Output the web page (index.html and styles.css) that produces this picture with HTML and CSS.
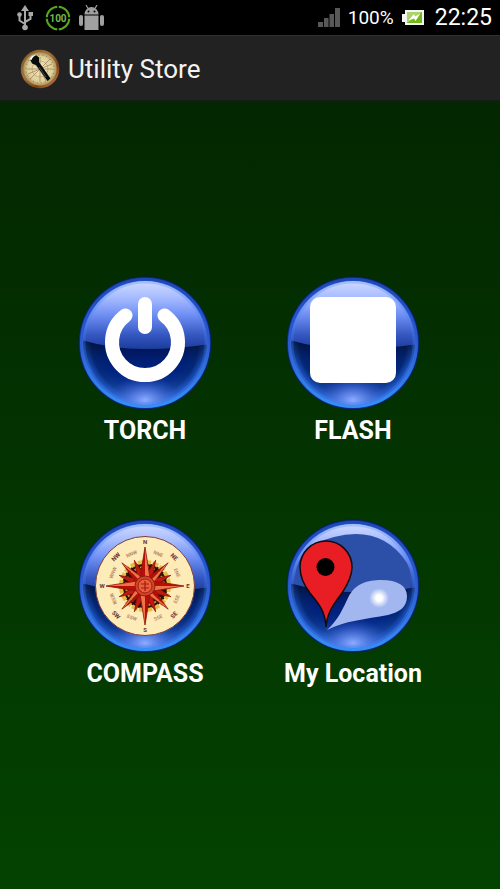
FILE: index.html
```html
<!DOCTYPE html>
<html lang="en">
<head>
    <meta charset="UTF-8">
    <meta name="viewport" content="width=device-width, initial-scale=1.0">
    <title>Utility Store</title>
    <link rel="stylesheet" href="styles.css">
</head>
<body>
    <!-- shared glass ball -->
    <svg class="defs" width="0" height="0" aria-hidden="true">
        <defs>
            <radialGradient id="rim" cx="50%" cy="50%" r="50%">
                <stop offset="0.9" stop-color="#2358cc"/>
                <stop offset="0.96" stop-color="#1d4fc0"/>
                <stop offset="1" stop-color="#04195c"/>
            </radialGradient>
            <linearGradient id="rimLight" x1="0" y1="0" x2="0" y2="1">
                <stop offset="0" stop-color="#1e48b8"/>
                <stop offset="0.5" stop-color="#2a5cd0"/>
                <stop offset="1" stop-color="#3490f4"/>
            </linearGradient>
            <linearGradient id="upper" x1="0" y1="0" x2="0" y2="1">
                <stop offset="0" stop-color="#d2dcff"/>
                <stop offset="0.25" stop-color="#a8bcff"/>
                <stop offset="0.5" stop-color="#7090f4"/>
                <stop offset="0.8" stop-color="#3456c0"/>
                <stop offset="1" stop-color="#1c3c9c"/>
            </linearGradient>
            <radialGradient id="lower" gradientUnits="userSpaceOnUse" cx="67" cy="67" r="62">
                <stop offset="0" stop-color="#001c78"/>
                <stop offset="0.7" stop-color="#001f78"/>
                <stop offset="0.86" stop-color="#06286f"/>
                <stop offset="0.93" stop-color="#1a4cae"/>
                <stop offset="1" stop-color="#2c6ce0"/>
            </radialGradient>
            <linearGradient id="lowerTint" x1="0" y1="0" x2="0" y2="1">
                <stop offset="0" stop-color="#000820" stop-opacity="0.75"/>
                <stop offset="0.45" stop-color="#002a90" stop-opacity="0.25"/>
                <stop offset="1" stop-color="#3a80f0" stop-opacity="0.8"/>
            </linearGradient>
            <radialGradient id="glow">
                <stop offset="0" stop-color="#8cacff"/>
                <stop offset="0.4" stop-color="#5c80e8" stop-opacity="0.75"/>
                <stop offset="1" stop-color="#2850c0" stop-opacity="0"/>
            </radialGradient>
            <radialGradient id="spot">
                <stop offset="0.3" stop-color="#fff"/>
                <stop offset="1" stop-color="#fff" stop-opacity="0"/>
            </radialGradient>
            <clipPath id="ballClip"><circle cx="67" cy="67" r="62"/></clipPath>
            <symbol id="ball" viewBox="0 0 134 134">
                <circle cx="67" cy="67" r="66.500" fill="url(#rim)"/>
                <circle cx="67" cy="67" r="63" fill="none" stroke="url(#rimLight)" stroke-width="4"/>
                <circle cx="67" cy="67" r="62" fill="url(#lower)"/>
                <g clip-path="url(#ballClip)">
                    <path d="M4 64Q32 73 67 73T130 68V130H4Z" fill="url(#lowerTint)"/>
                    <path d="M4 64Q32 73 67 73T130 68V4H4Z" fill="url(#upper)"/>
                    <ellipse cx="67" cy="124" rx="38" ry="24" fill="url(#glow)"/>
                </g>
                <circle cx="67" cy="67" r="61" fill="none" stroke="#4a86f4" stroke-opacity="0.3" stroke-width="3"/>
            </symbol>
            <!-- two-tone compass point, drawn towards north -->
            <symbol id="ray" viewBox="-10 -40 20 40" overflow="visible">
                <path d="M0-39L-5-8 0 0Z" fill="#b80d08"/>
                <path d="M0-39L5-8 0 0Z" fill="#ee7448"/>
                <path d="M0-39L-5-8 0 0 5-8Z" fill="none" stroke="#901008" stroke-width="0.800"/>
            </symbol>
        </defs>
    </svg>

    <div class="status-bar">
        <div class="status-left">
            <svg class="usb" viewBox="0 0 16 26" aria-hidden="true">
                <path d="M8 4V22M8 19L2.500 15.500V10M8 17L13.500 14V9" fill="none" stroke="#a8a8a8" stroke-width="2"/>
                <path d="M8 0L12 6H4ZM11.500 7H16V11H11.500Z" fill="#a8a8a8"/>
                <circle cx="2.500" cy="9.500" r="2.300" fill="#a8a8a8"/>
                <circle cx="8" cy="22.500" r="2.800" fill="#a8a8a8"/>
            </svg>
            <svg class="charge" viewBox="0 0 26 26" aria-hidden="true">
                <circle cx="13" cy="13" r="11.300" fill="none" stroke="#58a81e" stroke-width="2"/>
                <path d="M13 0V4M13 22V26M0 13H4M22 13H26" stroke="#000" stroke-width="1.500"/>
                <text x="13" y="17" text-anchor="middle" class="charge-text">100</text>
            </svg>
            <svg class="droid" viewBox="0 0 25 25" aria-hidden="true">
                <g fill="#a0a0a0">
                    <path d="M5.500 9.500A7 7.500 0 0 1 19.500 9.500ZM5.500 10.500H19.500V25H5.500Z"/>
                    <rect x="0" y="10" width="4" height="11" rx="2"/>
                    <rect x="21" y="10" width="4" height="11" rx="2"/>
                </g>
                <path d="M7 0L9 3.500M18 0L16 3.500" stroke="#a0a0a0" stroke-width="1.200"/>
                <circle cx="9.500" cy="6.500" r="1" fill="#000"/>
                <circle cx="15.500" cy="6.500" r="1" fill="#000"/>
            </svg>
        </div>
        <div class="status-right">
            <svg class="signal" viewBox="0 0 22 19" aria-hidden="true">
                <path d="M0 14H5V19H0ZM6 10H10.500V19H6ZM11.500 6H16V19H11.500ZM17 0H22V19H17Z" fill="#585858"/>
            </svg>
            <span class="percent">100%</span>
            <svg class="battery" viewBox="0 0 22 15" aria-hidden="true">
                <path d="M3 0H22V15H3V12H0V4H3Z" fill="#f4f4f4"/>
                <rect x="5" y="2" width="15" height="11" fill="#72b816"/>
                <path d="M5 2H20L5 13Z" fill="#a8d468"/>
                <path d="M6.500 10.500L12 4L13 6.500L18.500 3.500L13.500 11L12 8.500Z" fill="#fff"/>
            </svg>
            <span class="clock">22:25</span>
        </div>
    </div>

    <header class="action-bar">
        <svg class="app-icon" viewBox="0 0 40 40" aria-hidden="true">
            <defs>
                <radialGradient id="face">
                    <stop offset="0" stop-color="#f4ecc0"/>
                    <stop offset="0.7" stop-color="#dcd098"/>
                    <stop offset="1" stop-color="#987840"/>
                </radialGradient>
                <linearGradient id="wood" x1="0" y1="0" x2="1" y2="1">
                    <stop offset="0" stop-color="#74582c"/>
                    <stop offset="0.4" stop-color="#a87238"/>
                    <stop offset="0.7" stop-color="#804018"/>
                    <stop offset="1" stop-color="#d08a50"/>
                </linearGradient>
            </defs>
            <circle cx="20" cy="20" r="18" fill="url(#face)" stroke="url(#wood)" stroke-width="2.500"/>
            <circle cx="20" cy="20" r="14" fill="none" stroke="#86764a" stroke-width="1" stroke-dasharray="1 3"/>
            <path d="M20 8V33M7 20H33M10 11L30 30M30 10L10 30M14 8L26 32M8 25L32 15" stroke="#9c7650" stroke-width="0.700"/>
            <circle cx="20" cy="20" r="8" fill="none" stroke="#a88458" stroke-width="0.500"/>
            <path d="M10 10Q12 6 16 6L19 8.500L19 13L30.500 29.500L27.500 32L16 16L12 14.500Z" fill="#080b0b"/>
            <path d="M9.500 10.500Q11 5.500 16.500 6Q12.500 7.500 11.500 11Z" fill="#f8fcff"/>
            <path d="M19 18L26 28" stroke="#3c5054" stroke-width="1"/>
        </svg>
        <h1 class="title">Utility Store</h1>
    </header>

    <main class="tools">
        <button type="button" class="tool">
            <svg class="tool-icon" viewBox="0 0 134 134" aria-hidden="true">
                <use href="#ball" width="134" height="134"/>
                <path d="M47.500 39.500A33 33 0 1 0 86.500 39.500M67 28V51" fill="none" stroke="#fff" stroke-width="14" stroke-linecap="round"/>
            </svg>
            <span class="tool-label">TORCH</span>
        </button>
        <button type="button" class="tool">
            <svg class="tool-icon" viewBox="0 0 134 134" aria-hidden="true">
                <use href="#ball" width="134" height="134"/>
                <rect x="24" y="21" width="86" height="86" rx="10" fill="#fff"/>
            </svg>
            <span class="tool-label">FLASH</span>
        </button>
        <button type="button" class="tool">
            <svg class="tool-icon" viewBox="0 0 134 134" aria-hidden="true">
                <use href="#ball" width="134" height="134"/>
                <g transform="translate(67 67)">
                    <circle r="49.500" fill="#fdebb8" stroke="#7c3a3c" stroke-width="1"/>
                    <circle r="23" fill="#2c1008"/>
                    <circle r="24" fill="none" stroke="#e4bc48" stroke-width="4" stroke-dasharray="6 1.500"/>
                    <circle r="19" fill="none" stroke="#d09838" stroke-width="2" stroke-dasharray="3 3"/>
                    <g id="thin">
                        <path id="t1" d="M0-28L-4-8 4-8Z" fill="#c01a10" stroke="#8c1008" stroke-width="0.600" transform="rotate(22.500)"/>
                        <use href="#t1" transform="rotate(45)"/>
                        <use href="#t1" transform="rotate(90)"/>
                        <use href="#t1" transform="rotate(135)"/>
                    </g>
                    <use href="#thin" transform="rotate(180)"/>
                    <g transform="rotate(45) scale(0.840)">
                        <use href="#ray" x="-10" y="-40" width="20" height="40"/>
                        <use href="#ray" x="-10" y="-40" width="20" height="40" transform="rotate(90)"/>
                        <use href="#ray" x="-10" y="-40" width="20" height="40" transform="rotate(180)"/>
                        <use href="#ray" x="-10" y="-40" width="20" height="40" transform="rotate(270)"/>
                    </g>
                    <use href="#ray" x="-10" y="-40" width="20" height="40"/>
                    <use href="#ray" x="-10" y="-40" width="20" height="40" transform="rotate(90)"/>
                    <use href="#ray" x="-10" y="-40" width="20" height="40" transform="rotate(180)"/>
                    <use href="#ray" x="-10" y="-40" width="20" height="40" transform="rotate(270)"/>
                    <circle r="10" fill="#d64428" stroke="#8c1c10" stroke-width="1"/>
                    <circle r="7" fill="#e8603c" stroke="#9c2014" stroke-width="1"/>
                    <path d="M0-5V5M-4-2H4M-4 2H4" stroke="#a41810" stroke-width="1.200"/>
                    <g class="dial">
                        <text x="0" y="-42">N</text>
                        <text x="43" y="2">E</text>
                        <text x="0" y="46">S</text>
                        <text x="-43" y="2">W</text>
                        <text y="-39" transform="rotate(45)">NE</text>
                        <text y="43" transform="rotate(-45)">SE</text>
                        <text y="43" transform="rotate(45)">SW</text>
                        <text y="-39" transform="rotate(-45)">NW</text>
                    </g>
                    <g class="dial dial-small">
                        <text y="-33" transform="rotate(22.500)">NNE</text>
                        <text y="-33" transform="rotate(67.500)">ENE</text>
                        <text y="36" transform="rotate(-67.500)">ESE</text>
                        <text y="36" transform="rotate(-22.500)">SSE</text>
                        <text y="36" transform="rotate(22.500)">SSW</text>
                        <text y="36" transform="rotate(67.500)">WSW</text>
                        <text y="-33" transform="rotate(-67.500)">WNW</text>
                        <text y="-33" transform="rotate(-22.500)">NNW</text>
                    </g>
                </g>
            </svg>
            <span class="tool-label">COMPASS</span>
        </button>
        <button type="button" class="tool">
            <svg class="tool-icon" viewBox="0 0 134 134" aria-hidden="true">
                <use href="#ball" width="134" height="134"/>
                <path d="M9 65Q7 28 48 18Q96 6 121 44Q127 56 124 69Q95 74 67 73Q35 73 9 65Z" fill="#2c50a8"/>
                <path d="M41 111C53 100 57 89 62 79C69 64 82 61 95 61C112 61 121 67 121 77C121 89 113 93 102 96C80 100 58 102 41 111Z" fill="#a2b6f0"/>
                <circle cx="93" cy="79" r="10" fill="url(#spot)"/>
                <path d="M40 108C39 92 33 85 24 74C17 65 14 57 14 48A26 26 0 0 1 66 48C66 57 62 65 56 74C47 86 41 94 40 108Z" fill="#e91e24" stroke="#100c10" stroke-width="1.500"/>
                <circle cx="39.500" cy="48" r="9" fill="#000"/>
            </svg>
            <span class="tool-label">My Location</span>
        </button>
    </main>
</body>
</html>
```

FILE: styles.css
```css
* {
    box-sizing: border-box;
}

body {
    display: flex;
    flex-direction: column;
    min-height: 100vh;
    margin: 0;
    background: #000;
    color: #fff;
    font-family: Roboto, sans-serif;
}

.defs {
    position: absolute;
}

.status-bar {
    display: flex;
    justify-content: space-between;
    align-items: center;
    height: 35px;
    padding: 0 8px 0 17px;
    background: #000;
}

.status-left,
.status-right {
    display: flex;
    align-items: center;
    gap: 8px;
}

.usb {
    width: 16px;
    height: 26px;
    margin-right: 4px;
}

.charge {
    width: 26px;
    height: 26px;
}

.charge-text {
    fill: #78b850;
    font-size: 10px;
    font-weight: bold;
}

.droid {
    width: 25px;
    height: 25px;
}

.signal {
    width: 22px;
    height: 19px;
}

.percent {
    font-size: 19px;
}

.battery {
    width: 22px;
    height: 15px;
}

.clock {
    margin-left: 3px;
    font-size: 23px;
}

.action-bar {
    display: flex;
    align-items: center;
    gap: 8px;
    height: 67px;
    padding: 2px 20px 0;
    background: #222;
    border-top: 1px solid #303030;
    border-bottom: 2px solid #1a1a1a;
}

.app-icon {
    width: 40px;
    height: 40px;
}

.title {
    margin: 0;
    font-size: 26px;
    font-weight: normal;
    color: #f3f3f3;
}

.tools {
    flex: 1;
    display: grid;
    grid-template-columns: repeat(2, 208px);
    justify-content: center;
    align-content: center;
    row-gap: 73px;
    padding: 0 2px 26px 0;
    background: linear-gradient(#032700, #034300);
}

.tool {
    display: flex;
    flex-direction: column;
    align-items: center;
    gap: 6px;
    padding: 0;
    border: none;
    background: none;
    color: #fff;
    font-family: inherit;
    cursor: pointer;
}

.tool-icon {
    width: 134px;
    height: 134px;
}

.tool-label {
    font-size: 25px;
    font-weight: bold;
    line-height: 30px;
}

.dial {
    fill: #70302c;
    font-size: 6px;
    font-weight: bold;
    text-anchor: middle;
}

.dial-small {
    fill: #b88c70;
    font-size: 5px;
}
```
